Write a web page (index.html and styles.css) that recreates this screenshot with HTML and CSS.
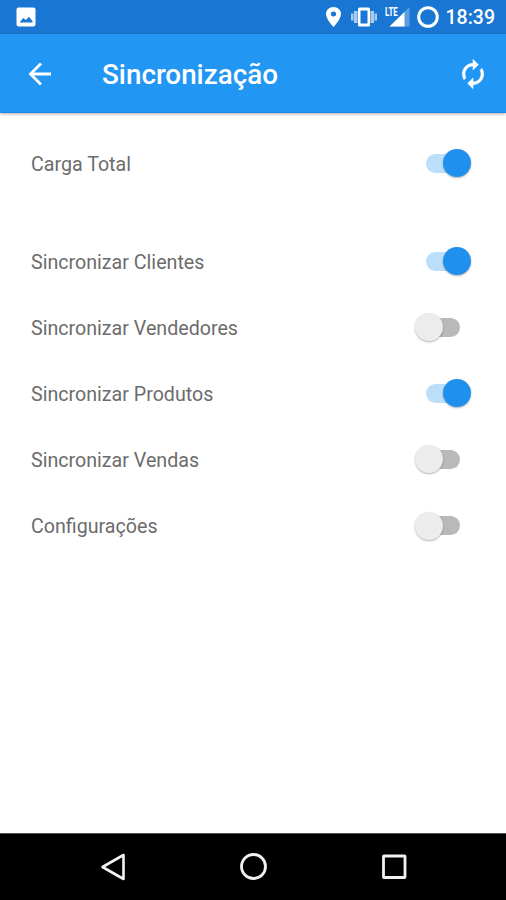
FILE: index.html
```html
<!DOCTYPE html>
<html lang="pt-BR">
<head>
<meta charset="utf-8">
<title>Sincronização</title>
<link rel="stylesheet" href="styles.css">
</head>
<body>
<header class="status">
  <svg class="photo" width="20" height="20" viewBox="0 0 20 20"><path fill="#fff" fill-rule="evenodd" d="M2.500 0.500h15a2 2 0 0 1 2 2v15a2 2 0 0 1-2 2h-15a2 2 0 0 1-2-2v-15a2 2 0 0 1 2-2zM3.500 15.500h13v-1.500l-3.700-4.200-2.800 3.200-2.700-2z"/></svg>
  <div class="indicators">
    <svg class="pin" width="15" height="20" viewBox="5 2 14 20" preserveAspectRatio="none"><path fill="#fff" d="M12 2C8.130 2 5 5.130 5 9c0 5.250 7 13 7 13s7-7.750 7-13c0-3.870-3.130-7-7-7zm0 9.500a2.500 2.500 0 0 1 0-5 2.500 2.500 0 0 1 0 5z"/></svg>
    <svg class="vibrate" width="26" height="20" viewBox="0 0 26 20"><path fill="#fff" fill-rule="evenodd" d="M8.500 0.500h9a1.500 1.500 0 0 1 1.500 1.500v16a1.500 1.500 0 0 1-1.500 1.500h-9a1.500 1.500 0 0 1-1.500-1.500v-16a1.500 1.500 0 0 1 1.500-1.500zM9.500 3.500v13h7v-13z"/><path fill="#a9cdf0" d="M0 6.500h2.500v7h-2.500zM3 4h3.500v12h-3.500zM19.500 4h3.500v12h-3.500zM23.500 6.500h2.500v7h-2.500z"/></svg>
    <div class="network">
      <svg width="26" height="20" viewBox="0 0 26 20"><path fill="#5c9fdf" d="M25.500 0v19.500h-20z"/><path fill="#fff" d="M20.500 4.900v14.600h-15z"/></svg>
      <span class="lte">LTE</span>
    </div>
    <svg class="ring" width="22" height="22" viewBox="0 0 22 22"><circle cx="11" cy="11" r="9.300" fill="none" stroke="#fff" stroke-width="3"/></svg>
    <span class="time">18:39</span>
  </div>
</header>
<nav class="appbar">
  <svg class="back" width="24" height="24" viewBox="0 0 24 24"><path fill="none" stroke="#fff" stroke-width="2.800" d="M24.500 12H3.500M14 1.500L3.500 12 14 22.500"/></svg>
  <h1>Sincronização</h1>
  <svg class="sync" width="32" height="32" viewBox="0 0 24 24"><path fill="#fff" stroke="#fff" stroke-width="0.400" d="M12 6v3l4-4-4-4v3c-4.420 0-8 3.580-8 8 0 1.570.46 3.030 1.240 4.260L6.700 14.800c-.45-.83-.7-1.790-.7-2.800 0-3.310 2.690-6 6-6zm6.760 1.740L17.300 9.200c.44.840.7 1.790.7 2.800 0 3.310-2.690 6-6 6v-3l-4 4 4 4v-3c4.420 0 8-3.580 8-8 0-1.570-.46-3.030-1.240-4.260z"/></svg>
</nav>
<main class="list">
  <div class="row total"><span>Carga Total</span><i class="switch on"></i></div>
  <div class="row"><span>Sincronizar Clientes</span><i class="switch on"></i></div>
  <div class="row"><span>Sincronizar Vendedores</span><i class="switch"></i></div>
  <div class="row"><span>Sincronizar Produtos</span><i class="switch on"></i></div>
  <div class="row"><span>Sincronizar Vendas</span><i class="switch"></i></div>
  <div class="row"><span>Configurações</span><i class="switch"></i></div>
</main>
<footer class="navbar">
  <svg width="28" height="30" viewBox="0 0 28 30"><path fill="none" stroke="#f2f2f2" stroke-width="2.600" stroke-linejoin="round" d="M24.500 3v24L3.500 15z"/></svg>
  <svg width="28" height="30" viewBox="0 0 28 30"><circle cx="13.500" cy="14.500" r="12" fill="none" stroke="#f2f2f2" stroke-width="2.800"/></svg>
  <svg width="28" height="30" viewBox="0 0 28 30"><rect x="3.500" y="4" width="21.500" height="21.500" rx="0.500" fill="none" stroke="#f2f2f2" stroke-width="2.800"/></svg>
</footer>
</body>
</html>
```
FILE: styles.css
```css
* { box-sizing: border-box; }
body {
  margin: 0;
  height: 900px;
  display: flex;
  flex-direction: column;
  background: #fff;
  font-family: Roboto, "Liberation Sans", sans-serif;
  overflow: hidden;
}
svg { display: block; flex: none; }
.status {
  height: 34px;
  flex: none;
  display: flex;
  align-items: center;
  justify-content: space-between;
  padding: 0 11px 0 16px;
  background: #1976d2;
  color: #fff;
}
.indicators { display: flex; align-items: center; }
.vibrate { margin-left: 10px; }
.network { position: relative; margin-left: 7px; }
.lte {
  position: absolute;
  left: 1px;
  top: 1px;
  font-size: 12px;
  line-height: 9px;
  font-weight: 700;
  transform: scaleX(0.66);
  transform-origin: left;
}
.ring { margin: 0 7px; }
.time { font-size: 19.5px; font-weight: 500; line-height: 34px; padding-top: 2px; }
.appbar {
  height: 79px;
  flex: none;
  display: flex;
  align-items: center;
  padding: 2px 17px 0 27px;
  background: #2196f3;
  border-bottom: 1px solid #1b89e4;
  box-shadow: 0 1px 3px rgba(0, 0, 0, 0.32);
  color: #fff;
}
.sync { margin-bottom: 1px; }
h1 {
  flex: 1;
  margin: 2px 0 0 51px;
  font-size: 27.8px;
  font-weight: 500;
  line-height: 36px;
}
.list { flex: 1; padding-top: 17px; }
.row {
  height: 66.1px;
  display: flex;
  align-items: center;
  justify-content: space-between;
  padding: 0 35px 0 31px;
  font-size: 19.65px;
  color: #6c6c6c;
}
.row span { padding-top: 2px; }
.total { margin-bottom: 32px; }
.switch {
  width: 56px;
  height: 28px;
  display: flex;
  align-items: center;
  position: relative;
}
.switch::before {
  content: "";
  width: 34px;
  height: 19px;
  margin-left: 11px;
  border-radius: 10px;
  background: #b9b9b9;
}
.switch::after {
  content: "";
  position: absolute;
  left: 0;
  top: 0;
  width: 28px;
  height: 28px;
  border-radius: 50%;
  background: #ececec;
  box-shadow: 0 1px 2px rgba(0, 0, 0, 0.3);
}
.switch.on::before { background: #bbdffb; }
.switch.on::after { left: 28px; background: #2090ee; }
.navbar {
  height: 67px;
  flex: none;
  display: flex;
  justify-content: space-between;
  align-items: center;
  padding: 0 98px 0 99px;
  background: #000;
  border-top: 1px solid #555;
}
```
